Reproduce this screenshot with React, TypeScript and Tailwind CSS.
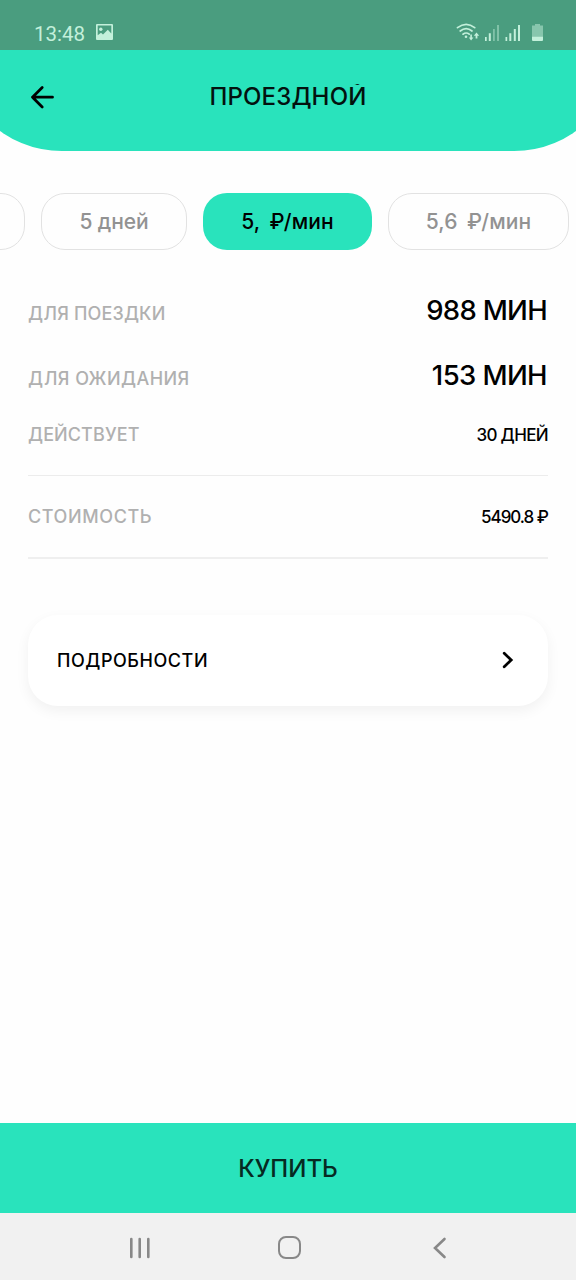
const periods = [
  { label: '5 дней', active: false, box: 'w-[146px]', text: 'tracking-[-0.1px]' },
  { label: '5,  ₽/мин', active: true, box: 'w-[169px]', text: 'tracking-[0.1px] [word-spacing:-1px]' },
  { label: '5,6  ₽/мин', active: false, box: 'w-[181px]', text: 'tracking-[0.1px] [word-spacing:-1px]' },
];

function StatusBar() {
  return (
    <div className="flex h-[50px] items-start justify-between bg-[#4a9d7f] pl-[34px] pr-8 text-[#c3f0db]">
      <div className="flex pt-[21px]">
        <span className="w-[62px] font-[Roboto,sans-serif] text-[20.5px] leading-[26px]">13:48</span>
        <svg className="mt-[3px] h-4 w-[17px]" viewBox="0 0 17 16" fill="currentColor">
          <path
            fillRule="evenodd"
            d="M1 0h15a1 1 0 0 1 1 1v14a1 1 0 0 1-1 1H1a1 1 0 0 1-1-1V1a1 1 0 0 1 1-1Zm.7 1.5v9.8l3.3-2.5 2 1.6 4.8-4.6 3.5 3.6V1.5Z"
          />
          <circle cx="4.8" cy="5.2" r="1.7" />
        </svg>
      </div>
      <svg className="mt-[22px] h-5 w-[88px]" viewBox="456 22 88 20" fill="currentColor">
        <g fill="none" stroke="currentColor" strokeWidth="1.7" strokeLinecap="round">
          <path d="M457.5 27.7q8.8-6.8 17.2 0" />
          <path d="M460.2 31q6-4.6 11.8 0" />
          <path d="M463 34.2q3.2-2.4 6.2 0" />
        </g>
        <circle cx="466" cy="36.7" r="1.3" />
        <path d="M470.3 34.5h1.6v3h1.5l-2.3 3-2.3-3h1.5ZM475.6 38.5v-2.7h-1.8l2.7-3.2 2.7 3.2h-1.8v2.7Z" />
        <path d="M485 37h1.7v4H485ZM488.8 33.3h2V41h-2Z" />
        <path opacity=".45" d="M493 29h1.8v12H493ZM497 25h2v16h-2Z" />
        <path d="M505.5 37h1.7v4h-1.7ZM509.3 33.3h2V41h-2ZM513.8 29h2v12h-2ZM518 25h2v16h-2Z" />
        <path opacity=".5" d="M535 24h5v1.5h3V37h-11V25.5h3Z" />
        <path d="M532 36.8h11V40a1 1 0 0 1-1 1h-9a1 1 0 0 1-1-1Z" />
      </svg>
    </div>
  );
}

function Header() {
  return (
    <header className="h-[101px] overflow-hidden">
      <div className="-mx-11 -mt-[50px] h-[151px] rounded-b-[106px] bg-[#29e3bc] px-11 pt-[50px]">
        <div className="grid h-[94px] grid-cols-[72px_1fr_72px] items-center">
          <svg className="ml-[30px] h-6 w-6" viewBox="0 0 24 24" fill="none" stroke="#000" strokeWidth="2.8" strokeLinecap="round" strokeLinejoin="round">
            <path d="M22.5 12.2H2.5M12.2 2.5L2.5 12.2L12.2 21.9" />
          </svg>
          <h1 className="h-[26px] overflow-hidden text-center text-2xl leading-[26px] font-medium tracking-[0.15px] text-[#03120f]">
            ПРОЕЗДНОЙ
          </h1>
        </div>
      </div>
    </header>
  );
}

function Periods() {
  return (
    <div className="mt-[42px] flex h-[57px] gap-4 overflow-hidden">
      <div className="-ml-10 w-[65px] shrink-0 rounded-[24px] border border-[#e2e2e2]" />
      {periods.map((period) => (
        <button
          key={period.label}
          className={`shrink-0 rounded-[24px] pt-px text-[21px] font-medium whitespace-pre ${period.box} ${period.text} ${
            period.active ? 'bg-[#29e3bc] text-black' : 'border border-[#e2e2e2] text-[#929292]'
          }`}
        >
          {period.label}
        </button>
      ))}
    </div>
  );
}

function Details() {
  return (
    <div className="mx-7 mt-[27px] font-medium text-black">
      <div className="flex h-[66px] items-center justify-between">
        <span className="pt-[7px] text-lg tracking-[0.15px] text-[#b0b0b0]">ДЛЯ ПОЕЗДКИ</span>
        <span className="pt-0.5 pr-px text-[27.5px] tracking-[-0.7px]">988 МИН</span>
      </div>
      <div className="flex h-16 items-center justify-between">
        <span className="pt-[7px] text-lg tracking-[0.45px] text-[#b0b0b0]">ДЛЯ ОЖИДАНИЯ</span>
        <span className="pt-0.5 pr-px text-[27.5px] tracking-[-0.6px]">153 МИН</span>
      </div>
      <div className="flex h-[69px] items-center justify-between border-b border-[#ececec] pb-[13px]">
        <span className="text-lg tracking-[0.1px] text-[#b0b0b0]">ДЕЙСТВУЕТ</span>
        <span className="pt-0.5 text-[17px] tracking-[-0.65px]">30 ДНЕЙ</span>
      </div>
      <div className="flex h-[83px] items-center justify-between border-b-2 border-[#efefef]">
        <span className="text-lg tracking-[0.6px] text-[#b0b0b0]">СТОИМОСТЬ</span>
        <span className="pt-0.5 text-[17px] tracking-[-1px]">5490.8 ₽</span>
      </div>
    </div>
  );
}

function NavBar() {
  return (
    <nav className="flex h-[67px] items-center bg-[#f1f1f1] pt-[3px] pl-[129px] text-[#888]">
      <svg className="h-[22px] w-[22px]" viewBox="0 0 22 22" stroke="currentColor" strokeWidth="2.6" strokeLinecap="round">
        <path d="M2.3 2v18M10.7 2v18M19.3 2v18" />
      </svg>
      <div className="mb-px ml-[127px] h-[23px] w-[23px] rounded-[8px] border-[2.5px] border-[#888]" />
      <svg className="ml-[132px] h-[22px] w-[14px]" viewBox="0 0 14 22" fill="none" stroke="currentColor" strokeWidth="2.6" strokeLinecap="round">
        <path d="M11.5 2L2 11L11.5 20" />
      </svg>
    </nav>
  );
}

export default function App() {
  return (
    <div className="flex h-[1280px] w-[576px] flex-col overflow-hidden bg-[#fefefe] font-[Inter,'Noto_Sans',sans-serif]">
      <StatusBar />
      <Header />
      <Periods />
      <Details />
      <button className="mx-7 mt-14 flex h-[91px] shrink-0 items-center justify-between rounded-[30px] bg-white pr-[34px] pl-[29px] shadow-[0_5px_14px_rgba(0,0,0,0.055)]">
        <span className="text-lg font-medium tracking-[0.55px] text-black">ПОДРОБНОСТИ</span>
        <svg className="mb-px h-[18px] w-3" viewBox="0 0 12 18" fill="none" stroke="#000" strokeWidth="2.8" strokeLinecap="round">
          <path d="M2.2 2.2L9.2 9L2.2 15.8" />
        </svg>
      </button>
      <button className="mt-auto h-[90px] shrink-0 bg-[#29e3bc] pt-px text-2xl font-medium tracking-[0px] text-[#062a22]">
        КУПИТЬ
      </button>
      <NavBar />
    </div>
  );
}
